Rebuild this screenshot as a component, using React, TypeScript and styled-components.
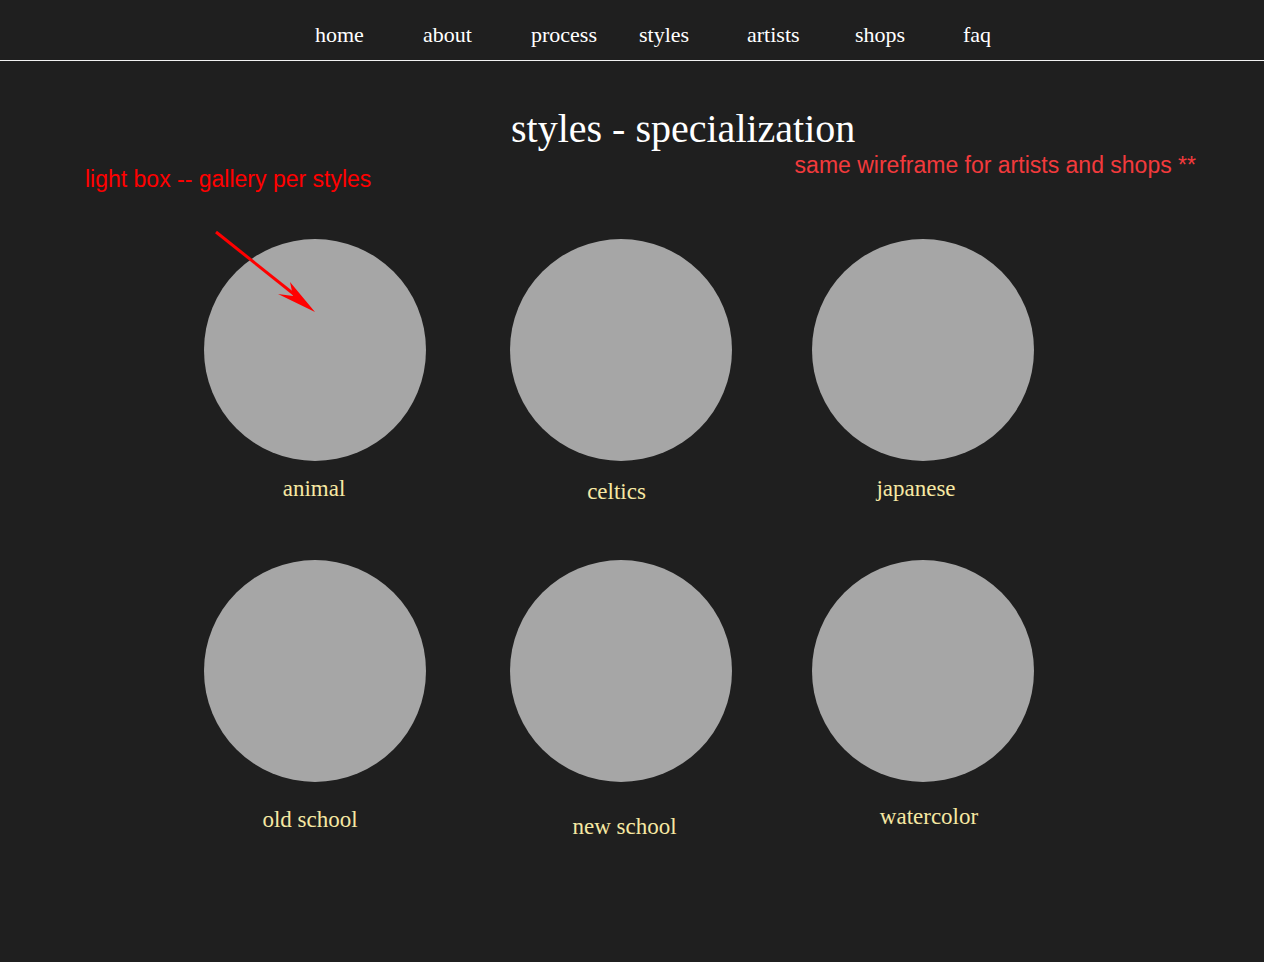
import React from "react";
import styled, { createGlobalStyle } from "styled-components";

const Global = createGlobalStyle`
  html, body { margin: 0; padding: 0; background: #1f1f1f; }
  body { font-family: "Liberation Serif", "Times New Roman", serif; }
`;

const Page = styled.div`
  width: 1264px;
  min-height: 962px;
  background: #1f1f1f;
  position: relative;
`;

const Nav = styled.nav`
  display: flex;
  align-items: center;
  padding-left: 315px;
  box-sizing: border-box;
  height: 61px;
  border-bottom: 1px solid #f2f2f2;
`;

const NavItem = styled.a`
  width: 108px;
  flex: none;
  color: #ffffff;
  font-size: 22px;
  line-height: 26px;
  text-decoration: none;
  margin-top: 10px;
`;

const Header = styled.header`
  padding-top: 45px;
`;

const Title = styled.h1`
  margin: 0 0 0 511px;
  font-weight: normal;
  font-size: 40px;
  line-height: 46px;
  color: #ffffff;
`;

const Notes = styled.div`
  display: flex;
  justify-content: space-between;
  align-items: flex-start;
  padding: 0 68px 0 85px;
  margin-top: -11px;
`;

const Note = styled.p<{ $tone: string; $shift: number }>`
  margin: ${(p) => p.$shift}px 0 0 0;
  font-family: "Liberation Sans", Arial, sans-serif;
  font-size: 23px;
  line-height: 26px;
  color: ${(p) => p.$tone};
`;

const Grid = styled.section`
  display: grid;
  grid-template-columns: repeat(3, 222px);
  column-gap: 82px;
  row-gap: 0;
  padding-left: 204px;
  margin-top: 47px;
`;

const Cell = styled.div<{ $ml: number }>`
  display: flex;
  flex-direction: column;
  align-items: center;
  margin-left: ${(p) => p.$ml}px;
  height: 321px;
`;

const Circle = styled.div`
  width: 222px;
  height: 222px;
  border-radius: 50%;
  background: #a6a6a6;
  flex: none;
`;

const Label = styled.span<{ $dy: number; $dx: number }>`
  margin-top: ${(p) => p.$dy}px;
  transform: translateX(${(p) => p.$dx}px);
  font-size: 23px;
  line-height: 26px;
  color: #f6e8a3;
`;

const Arrow = styled.svg`
  position: absolute;
  left: 200px;
  top: 220px;
  overflow: visible;
`;

const navItems = ["home", "about", "process", "styles", "artists", "shops", "faq"];

const styles = [
  { name: "animal", ml: 0, dy: 15, dx: -1 },
  { name: "celtics", ml: 3, dy: 18, dx: -4 },
  { name: "japanese", ml: 0, dy: 15, dx: -7 },
  { name: "old school", ml: 0, dy: 25, dx: -5 },
  { name: "new school", ml: 3, dy: 32, dx: 4 },
  { name: "watercolor", ml: 0, dy: 22, dx: 6 },
];

export default function App() {
  return (
    <Page>
      <Global />
      <Nav>
        {navItems.map((n) => (
          <NavItem key={n} href="#">
            {n}
          </NavItem>
        ))}
      </Nav>
      <Header>
        <Title>styles - specialization</Title>
        <Notes>
          <Note $tone="#ff0000" $shift={25}>light box -- gallery per styles</Note>
          <Note $tone="#f23a3c" $shift={11}>same wireframe for artists and shops **</Note>
        </Notes>
      </Header>
      <Grid>
        {styles.map((s) => (
          <Cell key={s.name} $ml={s.ml}>
            <Circle />
            <Label $dy={s.dy} $dx={s.dx}>
              {s.name}
            </Label>
          </Cell>
        ))}
      </Grid>
      <Arrow width="130" height="100" viewBox="0 0 130 100">
        <line x1="16" y1="12" x2="100" y2="79" stroke="#ff0000" strokeWidth="3" />
        <path d="M115 92 L78 74 L93 76 L90 62 Z" fill="#ff0000" />
      </Arrow>
    </Page>
  );
}
